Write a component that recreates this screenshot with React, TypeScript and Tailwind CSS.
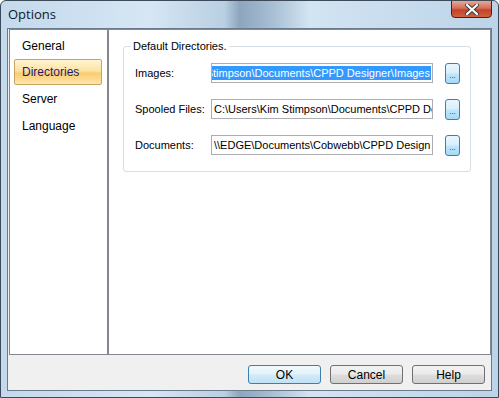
export default function App() {
  const items = ["General", "Directories", "Server", "Language"];
  const dirs = [
    { label: "Images:", value: "Stimpson\\Documents\\CPPD Designer\\Images", selected: true },
    { label: "Spooled Files:", value: "C:\\Users\\Kim Stimpson\\Documents\\CPPD De" },
    { label: "Documents:", value: "\\\\EDGE\\Documents\\Cobwebb\\CPPD Design" },
  ];

  return (
    <div
      className="w-[499px] h-[398px] relative overflow-hidden border border-[#3c4a5a] rounded-t-[6px] bg-[linear-gradient(90deg,#c4d9ec_0%,#d6e6f4_30%,#b9cfe2_45%,#8da6bd_48%,#a9c0d5_55%,#d3e4f2_62%,#c8dcee_80%,#bcd3e8_100%)] flex flex-col"
      style={{ fontFamily: '"Liberation Sans", Arial, sans-serif' }}
    >
      {/* title bar */}
      <div className="h-[27px] flex items-center justify-between pl-[7px] pr-[6px]">
        <span className="text-[13px] text-[#0b1a2c] mt-[1px]" style={{ fontFamily: '"Open Sans", sans-serif' }}>
          Options
        </span>
        <div className="self-start w-[41px] h-[18px] mt-[-1px] rounded-b-[4px] border border-[#5a1a12] bg-[linear-gradient(180deg,#e8a796_0%,#d46e58_45%,#c0432c_55%,#d2613f_100%)] flex items-center justify-center">
          <svg width="14" height="11" viewBox="0 0 14 11">
            <path d="M2 1 L12 10 M12 1 L2 10" stroke="#3b3b3b" strokeWidth="4" strokeLinecap="round" />
            <path d="M2 1 L12 10 M12 1 L2 10" stroke="#ffffff" strokeWidth="2.2" strokeLinecap="round" />
          </svg>
        </div>
      </div>

      {/* client */}
      <div className="mx-[6px] h-[363px] border border-[#6b7b8c] bg-[#f0f0f0] flex flex-col">
        <div className="flex h-[326px]">
          <div className="w-[103px] border border-[#828790] bg-white ml-[1px] flex flex-col pt-[2px]">
            {items.map((item) =>
              item === "Directories" ? (
                <div
                  key={item}
                  className="ml-[4px] mr-[5px] h-[26px] flex items-center pl-[7px] text-[12px] text-[#1d1a6b] border border-[#c9a461] rounded-[2px] bg-[linear-gradient(180deg,#fff3d0_0%,#fde3a4_45%,#fbcc6e_55%,#fde6ad_100%)]"
                >
                  {item}
                </div>
              ) : (
                <div key={item} className="h-[27px] flex items-center pl-[12px] text-[12px] text-black">
                  {item}
                </div>
              )
            )}
          </div>
          <div className="flex-1 border border-[#828790] bg-white pl-[14px] pr-[19px] pt-[16px]">
            <div className="relative border border-[#d5dfe5] rounded-[3px] h-[126px] pt-[16px] pl-[11px] pr-[10px]">
              <span className="absolute left-[7px] top-[-8px] bg-white px-[2px] text-[11px] text-black leading-[14px]">
                Default Directories.
              </span>
              <div className="flex flex-col gap-[16px]">
                {dirs.map((d) => (
                  <div key={d.label} className="flex items-center h-[20px]">
                    <span className="w-[76px] text-[11px] text-black">{d.label}</span>
                    <div
                      className={`w-[222px] h-[20px] border border-[#abadb3] bg-white overflow-hidden flex items-center px-[1px] ${
                        d.selected ? "justify-end" : ""
                      }`}
                    >
                      <span
                        className={`whitespace-nowrap text-[11px] leading-[14px] px-[1px] ${
                          d.selected ? "bg-[#3399ff] text-white" : "text-black"
                        }`}
                      >
                        {d.value}
                      </span>
                    </div>
                    <div className="ml-[12px] w-[15px] h-[21px] rounded-[3px] border border-[#3c7fb1] bg-[linear-gradient(180deg,#eaf6fd_0%,#d9f0fc_45%,#bee6fd_55%,#a7d9f5_100%)] flex items-end justify-center pb-[3px]">
                      <span className="text-[8px] leading-[8px] text-[#1a1a6e]">...</span>
                    </div>
                  </div>
                ))}
              </div>
            </div>
          </div>
        </div>
        <div className="flex-1 flex justify-end items-start pt-[10px] pr-[6px] gap-[9px]">
          {["OK", "Cancel", "Help"].map((b) => (
            <div
              key={b}
              className={`w-[73px] h-[19px] rounded-[3px] border flex items-center justify-center text-[12px] text-black ${
                b === "OK"
                  ? "border-[#3c7fb1] bg-[linear-gradient(180deg,#f2f9fd_0%,#e3f3fb_45%,#cfeaf8_55%,#bfe2f5_100%)]"
                  : "border-[#707070] bg-[linear-gradient(180deg,#f2f2f2_0%,#ebebeb_45%,#dddddd_55%,#cfcfcf_100%)]"
              }`}
            >
              {b}
            </div>
          ))}
        </div>
      </div>
    </div>
  );
}
